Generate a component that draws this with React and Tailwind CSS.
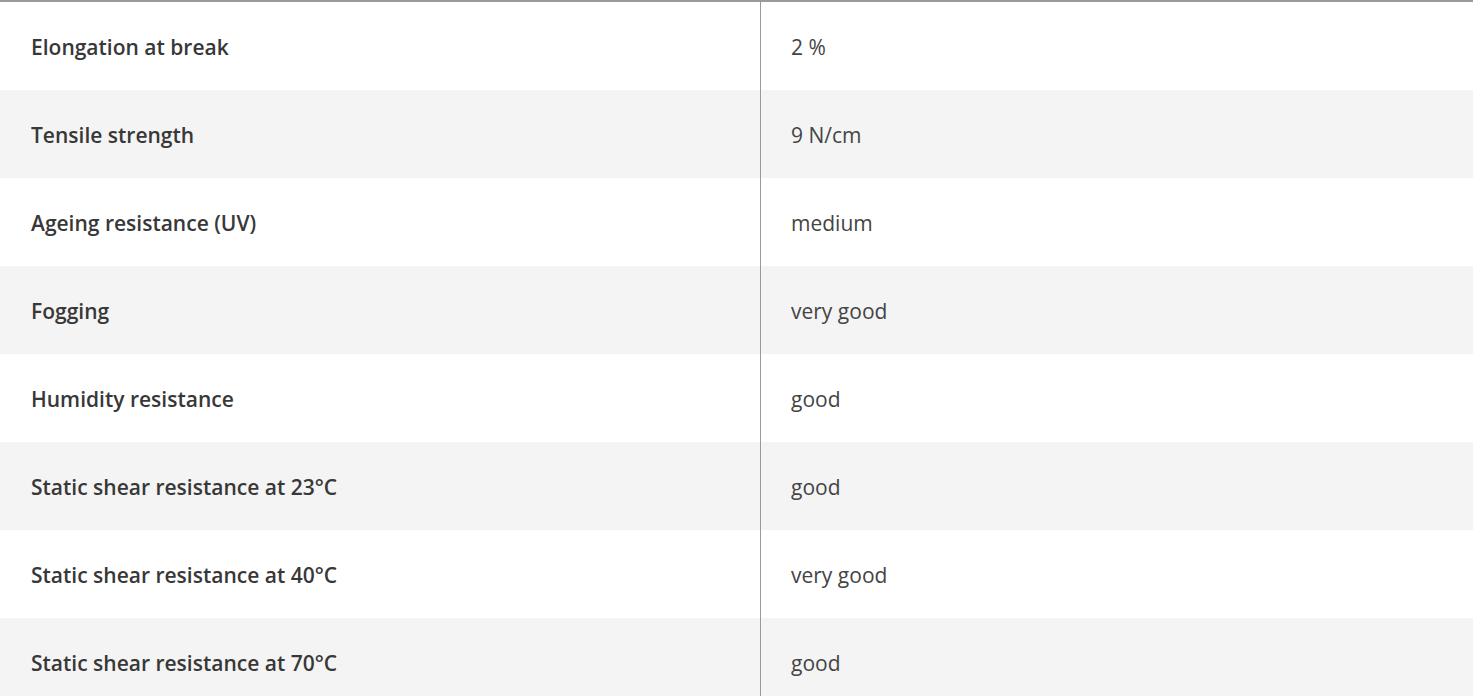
const rows = [
  ["Elongation at break", "2 %"],
  ["Tensile strength", "9 N/cm"],
  ["Ageing resistance (UV)", "medium"],
  ["Fogging", "very good"],
  ["Humidity resistance", "good"],
  ["Static shear resistance at 23°C", "good"],
  ["Static shear resistance at 40°C", "very good"],
  ["Static shear resistance at 70°C", "good"],
];

export default function App() {
  return (
    <div className="w-full bg-white font-['Open_Sans',sans-serif]">
      <div className="border-t-2 border-[#9a9a9a]">
        {rows.map(([label, value], i) => (
          <div
            key={i}
            className={`flex h-[88px] ${i % 2 === 1 ? "bg-[#f4f4f4]" : "bg-white"}`}
          >
            <div className="w-[760px] shrink-0 flex items-center pl-[31px] pt-[3px] text-[21px] font-semibold text-[#383838]">
              {label}
            </div>
            <div className="flex-1 flex items-center pl-[30px] pt-[3px] border-l border-[#9a9a9a] text-[21px] text-[#444444]">
              {value}
            </div>
          </div>
        ))}
      </div>
    </div>
  );
}
